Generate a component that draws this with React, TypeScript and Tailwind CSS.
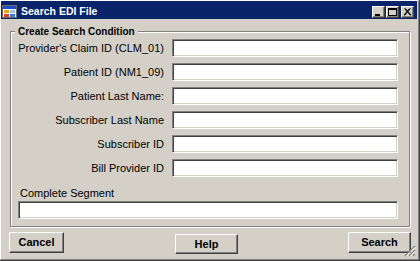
const raised =
  "border border-t-white border-l-white border-r-[#404040] border-b-[#404040] bg-[#d4d0c8] shadow-[inset_-1px_-1px_0_#808080]";
const sunken =
  "border border-t-[#808080] border-l-[#808080] border-r-white border-b-white bg-white shadow-[inset_1px_1px_0_#404040,inset_-1px_-1px_0_#d4d0c8] outline-none";

const fields = [
  "Provider's Claim ID (CLM_01)",
  "Patient ID (NM1_09)",
  "Patient Last Name:",
  "Subscriber Last Name",
  "Subscriber ID",
  "Bill Provider ID",
];

function AppIcon() {
  return (
    <svg width="15" height="13" viewBox="0 0 15 13">
      <rect x="0.5" y="0.5" width="14" height="12" fill="#ffffff" stroke="#6b6b6b" />
      <rect x="1" y="1" width="13" height="3" fill="#1c4fd0" />
      <rect x="2" y="5" width="5" height="3" fill="#f2a20d" />
      <rect x="8" y="5" width="5" height="3" fill="#9cc4f4" />
      <rect x="2" y="9" width="5" height="3" fill="#e04020" />
      <rect x="8" y="9" width="5" height="3" fill="#3a78e0" />
    </svg>
  );
}

function CaptionButton({ kind }: { kind: "min" | "max" | "close" }) {
  return (
    <div className={`flex h-[12px] w-[13px] items-center justify-center ${raised}`}>
      <svg width="9" height="8" viewBox="0 0 9 8">
        {kind === "min" && <rect x="1" y="6" width="5" height="2" fill="#000" />}
        {kind === "max" && (
          <>
            <rect x="0.5" y="0.5" width="8" height="7" fill="none" stroke="#000" />
            <rect x="0" y="1" width="9" height="1" fill="#000" />
          </>
        )}
        {kind === "close" && (
          <path d="M1.5 0.5 L7.5 7.5 M2.5 0.5 L8 7 M7.5 0.5 L1.5 7.5 M6.5 0.5 L1 7" stroke="#000" strokeWidth="1" />
        )}
      </svg>
    </div>
  );
}

function FieldRow({ label }: { label: string }) {
  return (
    <div className="flex h-[18px] items-center">
      <span className="w-[153px] text-right leading-[13px]">{label}</span>
      <input type="text" className={`ml-[8px] h-[18px] w-[226px] ${sunken}`} />
    </div>
  );
}

export default function App() {
  return (
    <div className="relative h-[261px] w-[420px] overflow-hidden border-r border-b border-[#404040] bg-[#d4d0c8] font-['Liberation_Sans',Arial,sans-serif] text-[11px] text-black">
      <div className="flex h-full flex-col border border-t-white border-l-white border-r-[#808080] border-b-[#808080] pr-[1px] pb-[1px]">
        <div className="flex h-[18px] shrink-0 items-end bg-[#0a246a] pb-[1px] pl-[1px] pr-[3px]">
          <AppIcon />
          <span className="ml-[4px] mb-[1px] text-[10.5px] font-bold leading-[12px] text-white">Search EDI File</span>
          <div className="ml-auto flex items-center">
            <CaptionButton kind="min" />
            <div className="ml-[1px]">
              <CaptionButton kind="max" />
            </div>
            <div className="ml-[2px]">
              <CaptionButton kind="close" />
            </div>
          </div>
        </div>

        <fieldset className="ml-[9px] mt-[7px] w-[400px] border border-[#808080] pb-[7px] shadow-[inset_1px_1px_0_#fff,1px_1px_0_#fff]">
          <legend className="ml-[4px] bg-[#d4d0c8] px-[3px] text-[10px] font-bold leading-[11px]">
            Create Search Condition
          </legend>
          <div className="flex flex-col gap-[6px] pt-[2px]">
            {fields.map((f) => (
              <FieldRow key={f} label={f} />
            ))}
          </div>
          <div className="ml-[9px] mt-[10px] leading-[13px]">Complete Segment</div>
          <input type="text" className={`ml-[7px] mt-[1px] block h-[18px] w-[380px] ${sunken}`} />
        </fieldset>

        <div className="mt-[5px] flex items-start pl-[8px] pr-[6px]">
          <button type="button" className={`h-[21px] w-[55px] text-[11px] font-bold ${raised}`}>
            Cancel
          </button>
          <button type="button" className={`ml-[111px] mt-[2px] h-[20px] w-[63px] text-[11px] font-bold ${raised}`}>
            Help
          </button>
          <button type="button" className={`ml-auto h-[21px] w-[63px] text-[11px] font-bold ${raised}`}>
            Search
          </button>
        </div>
      </div>

      <svg className="absolute right-[3px] bottom-[3px]" width="12" height="12" viewBox="0 0 12 12">
        <path d="M11 1 L1 11 M11 5 L5 11 M11 9 L9 11" stroke="#808080" strokeWidth="1.2" />
        <path d="M11 2.5 L2.5 11 M11 6.5 L6.5 11" stroke="#ffffff" strokeWidth="1" />
      </svg>
    </div>
  );
}
